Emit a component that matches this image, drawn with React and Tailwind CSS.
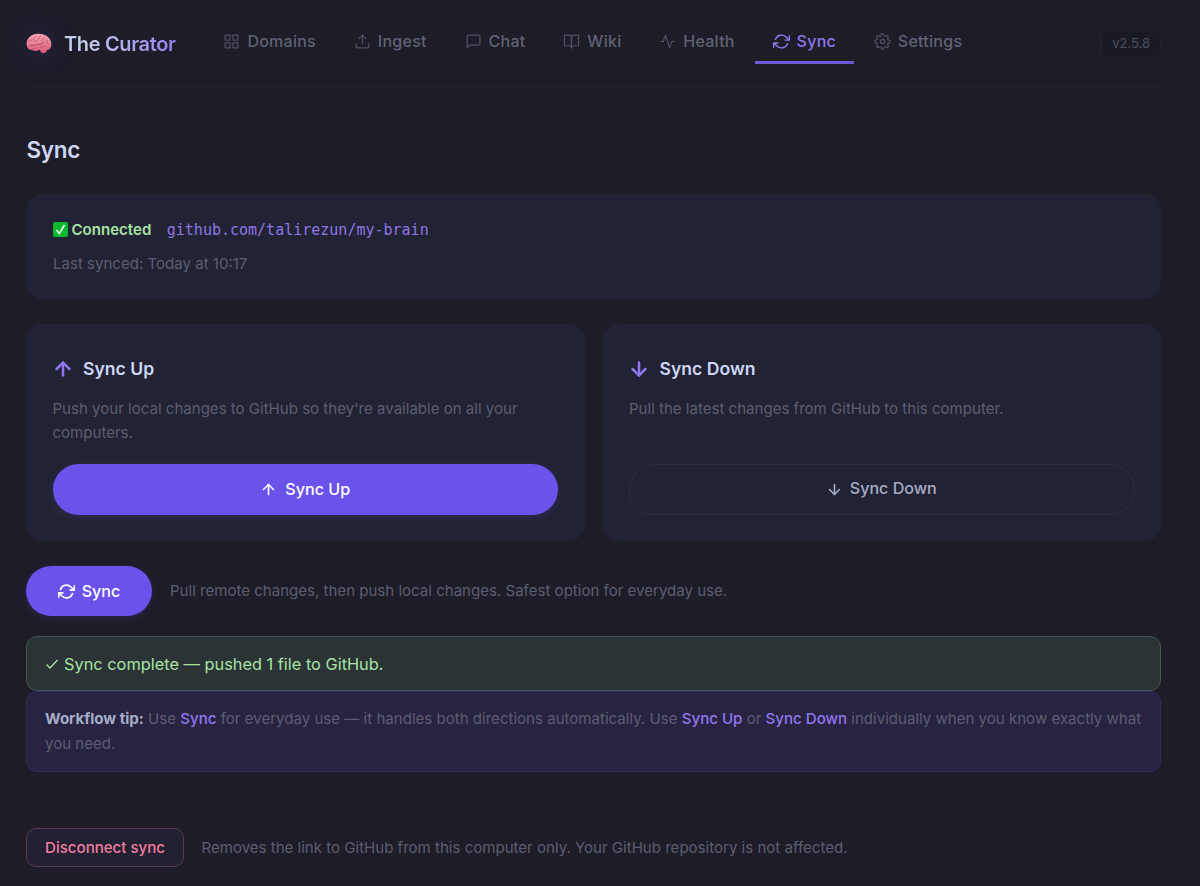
import { FiActivity, FiArrowDown, FiArrowUp, FiBookOpen, FiGrid, FiMessageSquare, FiRefreshCw, FiSettings, FiUpload } from 'react-icons/fi';

const tabs = [
  { name: 'Domains', icon: FiGrid },
  { name: 'Ingest', icon: FiUpload },
  { name: 'Chat', icon: FiMessageSquare },
  { name: 'Wiki', icon: FiBookOpen },
  { name: 'Health', icon: FiActivity },
  { name: 'Sync', icon: FiRefreshCw, active: true },
  { name: 'Settings', icon: FiSettings },
];

const Brain = () => (
  <svg viewBox="0 0 26 22" className="w-[26px] h-[22px] drop-shadow-[0_0_12px_rgba(90,82,235,0.25)]">
    <defs>
      <linearGradient id="brain" x1="0" y1="0" x2="0" y2="1">
        <stop offset="0" stopColor="#f7a6b2" />
        <stop offset="1" stopColor="#dd6280" />
      </linearGradient>
    </defs>
    <path d="M14 16c1-1 5.500-1.500 6.500.5.700 2-.500 3.500-3 3.700-2 0-3.800-2-3.500-4.200z" fill="#d9607c" />
    <path d="M.7 12C0 6 4.500 1 12 .8c7.500-.2 12.500 3.800 13.300 9.200.5 4-1.300 6.700-4.300 7.200-3.500.6-5-.7-7.500-.3-3 .9-5 1.300-7.500.2-2.800-.4-5-1.700-5.300-5.100z" fill="url(#brain)" />
    <g fill="none" stroke="#b9425f" strokeWidth="0.6" strokeLinecap="round">
      <path d="M4 12.500c3 1.500 5-1.500 8-1 3 .2 5-1.200 6.500-2.500" strokeWidth="0.9" />
      <path d="M3 7.500c1.500-1 3 .5 4.500-1S9 3.500 10.500 3" />
      <path d="M9 8.500c1.500-2 3-1 4-2.500s0-2.500 1.500-3.500" />
      <path d="M15 7.500c2-.5 3.500-1.500 3.500-3.500M20.500 7c1 1.500 0 3 2 4M14 14.500c2-1.500 4-.5 6-2M6 15.500c1.500.5 3-1 5-.7" />
    </g>
  </svg>
);

const App = () => {
  return (
    <div className="h-[886px] overflow-hidden bg-[#1d1c27] pl-[26px] pr-[39px] font-[Inter,sans-serif] text-[15.05px] text-[#5c5e70] antialiased">
      {/* Header */}
      <header className="flex h-[87px] items-start border-b border-[#222235]">
        <div className="flex items-center pt-7">
          <Brain />
          <h1 className="ml-3 w-[126px] whitespace-nowrap text-xl leading-8 font-semibold tracking-[-0.35px]">
            <span className="bg-linear-to-r from-[#c4cdec] from-20% to-[#957cf0] bg-clip-text text-transparent">The Curator</span>
          </h1>
        </div>
        <nav className="ml-[15.5px] flex gap-[2.05px] pt-5">
          {tabs.map(({ name, icon: Icon, active }) => (
            <a
              key={name}
              className={`flex h-11 items-center gap-[7px] border-b-3 px-[17.9px] text-base font-medium tracking-[0.26px] ${
                active ? 'border-[#6f58d6] text-[#9077f0]' : 'border-transparent text-[#606275]'
              }`}
            >
              <Icon className={`mt-px h-[17px] w-[17px] ${active ? '' : 'opacity-75'}`} strokeWidth={active ? 2 : 1.75} />
              {name}
            </a>
          ))}
        </nav>
        <span className="mt-[30px] ml-auto flex h-7 items-center rounded-md border border-[#222233] bg-[#1a1a23] px-2.5 text-[13px] text-[#4d4f60]">
          v2.5.8
        </span>
      </header>

      <main>
        <h2 className="mt-12 ml-[0.5px] text-[22.5px] leading-[30px] font-semibold tracking-[-0.3px] text-[#cdd6f4]">Sync</h2>

        {/* Connection status */}
        <section className="mt-[29px] h-[105px] rounded-2xl bg-[#212233] px-[27px] pt-6">
          <div className="flex items-center leading-6">
            <svg viewBox="0 0 15 15" className="mr-[3.5px] -mt-px h-[15px] w-[15px]">
              <rect width="15" height="15" rx="2" fill="#0bb92f" />
              <path d="M3.500 8l2.800 3.500L11.500 3" fill="none" stroke="#fff" strokeWidth="1.500" />
            </svg>
            <span className="font-semibold text-[#a6e3a1]">Connected</span>
            <span className="ml-[15.5px] font-['DejaVu_Sans_Mono',monospace] text-[15px] text-[#8f75e5]">github.com/talirezun/my-brain</span>
          </div>
          <p className="mt-[11px] leading-[22px]">Last synced: Today at 10:17</p>
        </section>

        {/* One-way sync cards */}
        <div className="mt-[25px] grid grid-cols-2 gap-[18px]">
          <section className="h-[217px] rounded-2xl bg-[#212233] px-[26.5px] pt-[31px]">
            <h3 className="flex items-center gap-[9.5px] text-[17.6px] leading-[27px] font-semibold text-[#cdd6f4]">
              <FiArrowUp className="-ml-px h-[22px] w-[22px] text-[#8f75ee]" strokeWidth={2.75} />
              Sync Up
            </h3>
            <p className="mt-[15px] h-[47px] leading-[23.5px]">
              Push your local changes to GitHub so they're available on all your computers.
            </p>
            <button className="mt-[19.5px] flex h-[51px] w-full items-center justify-center gap-2 rounded-full bg-[#6b52eb] text-[16.1px] font-medium text-white shadow-[0_2px_9px_rgba(107,82,235,0.18)]">
              <FiArrowUp className="mt-px h-[17px] w-[17px]" strokeWidth={2.25} />
              Sync Up
            </button>
          </section>
          <section className="h-[217px] rounded-2xl bg-[#212233] px-[26.5px] pt-[31px]">
            <h3 className="flex items-center gap-[9.5px] text-[17.6px] leading-[27px] font-semibold text-[#cdd6f4]">
              <FiArrowDown className="-ml-px h-[22px] w-[22px] text-[#8f75ee]" strokeWidth={2.75} />
              Sync Down
            </h3>
            <p className="mt-[15px] h-[47px] leading-[23.5px]">Pull the latest changes from GitHub to this computer.</p>
            <button className="mt-[19.5px] flex h-[51px] w-full items-center justify-center gap-[7px] rounded-full border border-[#2c2d43] pr-px pb-px text-[16.1px] font-medium text-[#a6adc8]">
              <FiArrowDown className="mt-0.5 h-[17px] w-[17px]" strokeWidth={2.25} />
              Sync Down
            </button>
          </section>
        </div>

        {/* Two-way sync */}
        <div className="mt-[25px] flex items-center gap-[18px]">
          <button className="flex h-[50px] w-[126px] items-center justify-center gap-[7px] rounded-full bg-[#6b52eb] text-[16.1px] font-medium text-white shadow-[0_2px_9px_rgba(107,82,235,0.18)]">
            <FiRefreshCw className="h-[17px] w-[17px]" strokeWidth={2.25} />
            Sync
          </button>
          <p>Pull remote changes, then push local changes. Safest option for everyday use.</p>
        </div>

        <div className="mt-5 flex h-[55px] items-center rounded-[11px] border border-[#42594d] bg-[#2b3337] px-[18px] pt-px text-[16.35px] text-[#a6e3a1]">
          <svg viewBox="0 0 14 14" className="mr-[5px] h-3.5 w-3.5" fill="none" stroke="currentColor" strokeWidth="1.300">
            <path d="M1.500 7.500l3.500 3.500L12.500 3" />
          </svg>
          Sync complete — pushed 1 file to GitHub.
        </div>
        <div className="h-[81px] rounded-[11px] border border-[#322b5c] bg-[#272341] px-[18px] pt-[15px] text-[15.07px] leading-[24.5px]">
          <strong className="font-bold text-[#a6adc8]">Workflow tip:</strong> Use{' '}
          <span className="font-medium text-[#9077f0]">Sync</span> for everyday use — it handles both directions automatically. Use{' '}
          <span className="font-medium text-[#9077f0]">Sync Up</span> or{' '}
          <span className="font-medium text-[#9077f0]">Sync Down</span> individually when you know exactly what you need.
        </div>

        {/* Disconnect */}
        <footer className="mt-[30px] flex items-center gap-[17.5px] border-t border-[#202130] pt-[25px]">
          <button className="h-[39px] w-[158px] rounded-[10px] border border-[#5c3a50] bg-[#212131] pt-px font-medium text-[#f27ba0]">
            Disconnect sync
          </button>
          <p className="pt-px">Removes the link to GitHub from this computer only. Your GitHub repository is not affected.</p>
        </footer>
      </main>
    </div>
  );
};

export default App;
